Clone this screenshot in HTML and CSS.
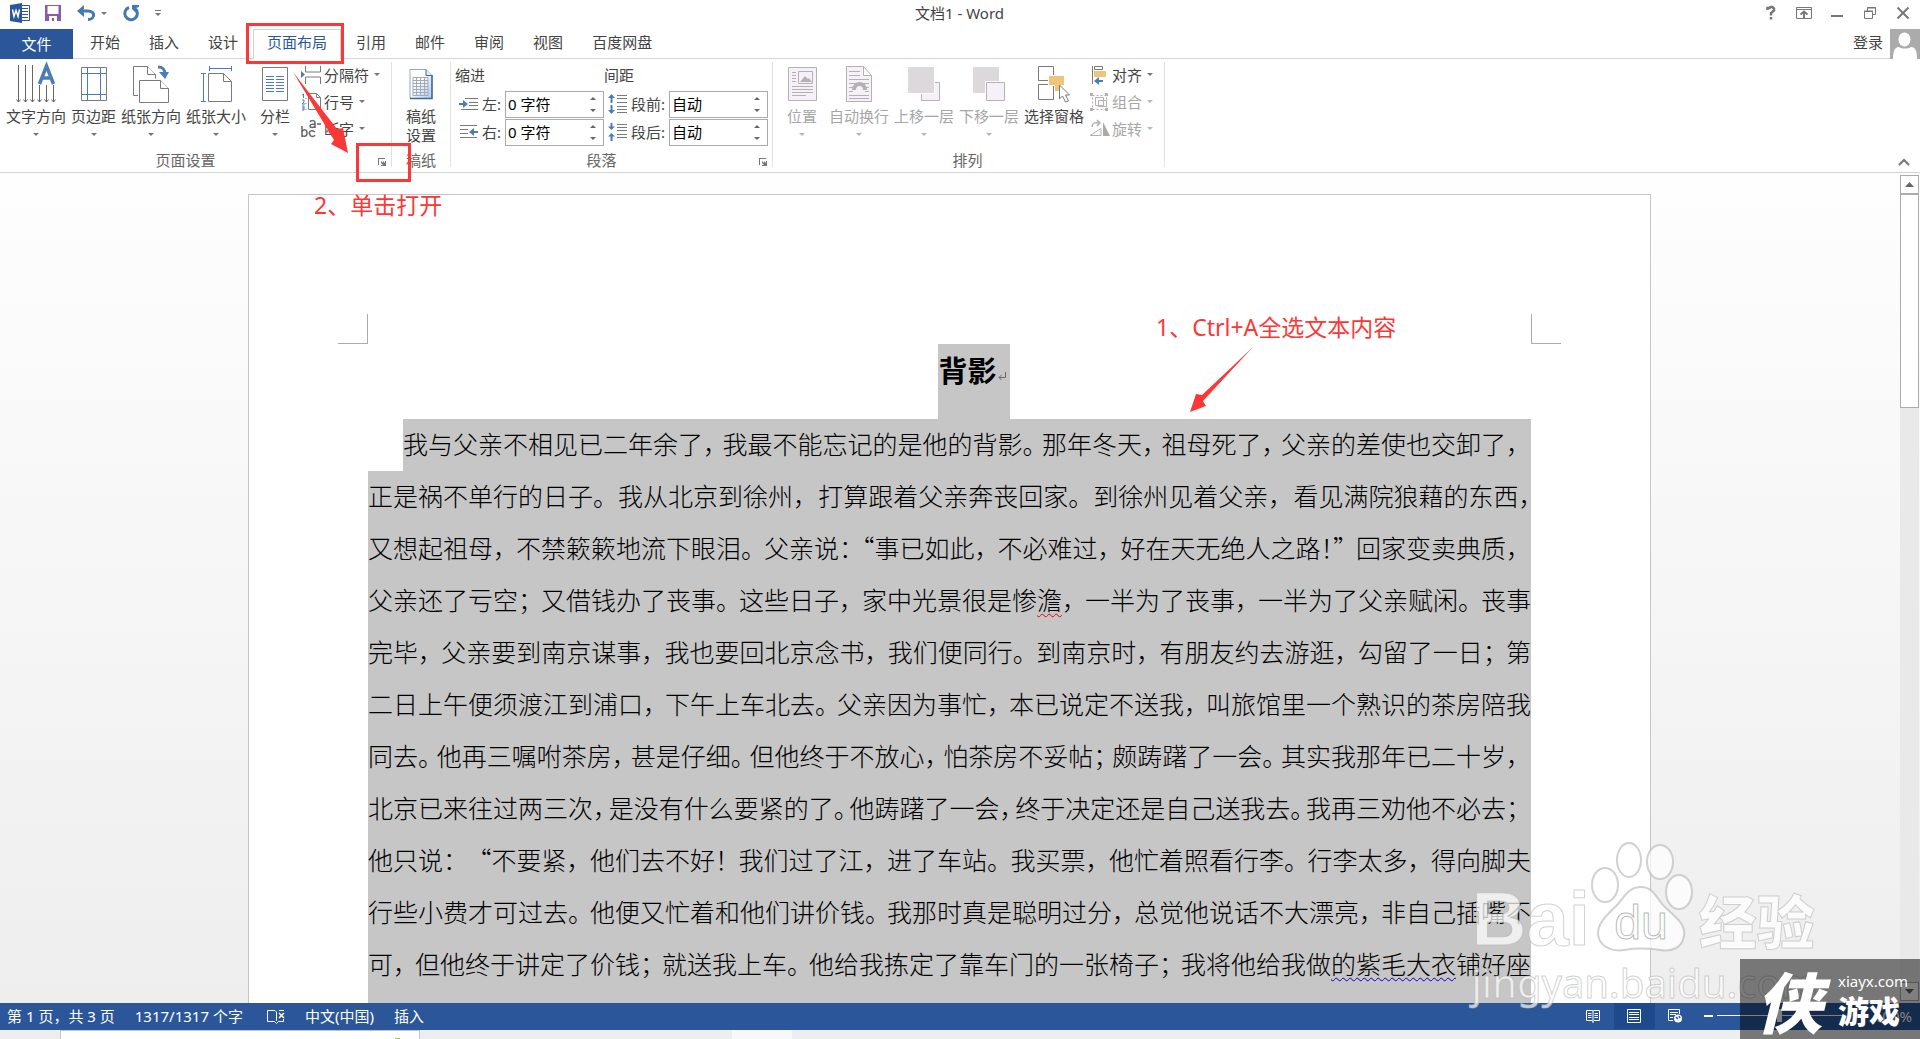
FILE: index.html
```html
<!DOCTYPE html>
<html lang="zh-CN">
<head>
<meta charset="utf-8">
<title>文档1 - Word</title>
<link rel="stylesheet" href="styles.css">
</head>
<body>
<div class="app">
  <header class="titlebar">
    <div class="quick">
      <svg class="q-word" width="20" height="20" viewBox="0 0 20 20"><path d="M11 2.500h8.500v15H11z" fill="#fff" stroke="#2b579a"/><path d="M12 5.500h6M12 8.500h6M12 11.500h6M12 14.500h6" stroke="#2b579a"/><path d="M0 2 12 0v20L0 18z" fill="#2b579a"/><path d="M2.500 6.500 4 13.500 6 7.500 8 13.500 9.500 6.500" fill="none" stroke="#fff" stroke-width="1.500"/></svg>
      <button class="plain q-save" aria-label="保存"><svg width="16" height="16" viewBox="0 0 16 16"><path d="M0 0h16v16H0z" fill="#8a5bab"/><path d="M2.500 1h11v8h-11zM4 11h8v5H9v-3H7v3H4z" fill="#fff"/></svg></button>
      <button class="plain q-undo" aria-label="撤消"><svg width="19" height="16" viewBox="0 0 19 16"><path d="M3 6h8c8 0 7 8.500 0 8.500" fill="none" stroke="#4478b0" stroke-width="3"/><path d="M7 0 0 6l7 6V8L5 6l2-2z" fill="#4478b0"/></svg></button>
      <i class="caret q-caret"></i>
      <button class="plain q-redo" aria-label="重复"><svg width="17" height="17" viewBox="0 0 17 17"><path d="M6 2.500a6.300 6.300 0 1 0 6 1" fill="none" stroke="#4478b0" stroke-width="3"/><path d="M9 0h7v2l-3 1v5L9 4z" fill="#4478b0"/></svg></button>
      <button class="plain q-more" aria-label="自定义快速访问工具栏"><svg width="6" height="6" viewBox="0 0 6 6"><path d="M0 0h6v1H0zM0 3h6L3 6z" fill="#777"/></svg></button>
    </div>
    <h1 class="doc-name">文档1 - Word</h1>
    <div class="win">
      <button class="plain" aria-label="帮助"><svg width="16" height="16" viewBox="0 0 16 16" fill="none" stroke="#777" stroke-width="2.500"><path d="M4.500 5V3h2l1-1h2l1.500 1.500v2L8 8v2.500"/><path d="M8 12v2.500"/></svg></button>
      <button class="plain" aria-label="功能区显示选项"><svg width="16" height="16" viewBox="0 0 16 16" fill="none" stroke="#777"><path d="M.5 2.500h15v11H.5zM.5 4.500h15"/><path d="M8 13V7M4.500 9.500 8 6.500l3.500 3" stroke-width="2"/></svg></button>
      <button class="plain" aria-label="最小化"><svg width="16" height="16" viewBox="0 0 16 16"><path d="M2 10h12v2H2z" fill="#777"/></svg></button>
      <button class="plain" aria-label="向下还原"><svg width="16" height="16" viewBox="0 0 16 16" fill="none" stroke="#777"><path d="M2.500 6.500h8v7h-8zM2 6h9M5.500 6V2.500h8v7H11M5 3h9"/></svg></button>
      <button class="plain" aria-label="关闭"><svg width="16" height="16" viewBox="0 0 16 16"><path d="m2.500 2.500 11 11m0-11-11 11" stroke="#777" stroke-width="2"/></svg></button>
    </div>
  </header>

  <nav class="tabs">
    <button class="file">文件</button>
    <div class="tab-list">
      <button class="tab">开始</button><button class="tab">插入</button><button class="tab">设计</button><button class="tab active">页面布局</button><button class="tab">引用</button><button class="tab">邮件</button><button class="tab">审阅</button><button class="tab">视图</button><button class="tab">百度网盘</button>
    </div>
    <a class="login" href="#">登录</a>
    <svg class="avatar" width="30" height="30" viewBox="0 0 30 30"><path d="M0 0h30v30H0z" fill="#ababab"/><path d="M3 30c0-10 3-12 6-12 3 2 9 2 12 0 4 0 6 3 6 12z" fill="#fff"/><ellipse cx="14.500" cy="10.500" rx="6" ry="7" fill="#fff"/></svg>
  </nav>

  <section class="ribbon">
    <div class="group g-page">
      <div class="tools">
        <button class="big"><svg width="42" height="40" viewBox="0 0 42 40" fill="none" stroke="#666"><path d="M3.500 2v37M10.500 2v37M17.500 2v37M24.500 22v17M31.500 22v17M38.500 22v17"/><path d="m1.500 36.500 2 2.500 2-2.500m3 0 2 2.500 2-2.500m3 0 2 2.500 2-2.500m3 0 2 2.500 2-2.500m3 0 2 2.500 2-2.500m3 0 2 2.500 2-2.500"/><path d="m24.500 21 7-18 7 18m-12-6h10" stroke="#4a7db5" stroke-width="3.500"/></svg><span>文字方向</span><i class="caret"></i></button>
        <button class="big"><svg width="28" height="40" viewBox="0 0 28 40" fill="none" stroke="#7a7a7a"><path d="M1.500 4.500h25v33h-25z"/><path d="M7.500 5v32M20.500 5v32M2 10.500h24M2 31.500h24" stroke="#4a7db5"/></svg><span>页边距</span><i class="caret"></i></button>
        <button class="big"><svg width="38" height="40" viewBox="0 0 38 40" fill="#fff" stroke="#7a7a7a"><path d="M6 32.500H1.500v-29h14l8 8v4"/><path d="M15.500 3.500v8h8" /><path d="M7.500 17.500h21l8 8v14h-29z"/><path d="M28.500 17.500v8h8"/><path d="M26 4c5 0 7 2 7 8" fill="none" stroke="#4a7db5" stroke-width="3"/><path d="M27 9h10l-4 7z" fill="#4a7db5" stroke="none"/></svg><span>纸张方向</span><i class="caret"></i></button>
        <button class="big"><svg width="34" height="40" viewBox="0 0 34 40" fill="none" stroke="#7a7a7a"><path d="M9.500 10.500h15l8 8v20h-23z"/><path d="M24.500 10.500v8h8"/><path d="M10.500 3v5m22-5v5m-22-2.500h22M2 10.500h5m-5 28h5m-2.500-28v28" stroke="#4a7db5"/></svg><span>纸张大小</span><i class="caret"></i></button>
        <button class="big col"><svg width="28" height="40" viewBox="0 0 28 40" fill="none" stroke="#7a7a7a"><path d="M1.500 4.500h25v33h-25z"/><path d="M5 13.500h8m2 0h8m-18 3h8m2 0h8m-18 3h8m2 0h8m-18 3h8m2 0h8m-18 3h8m2 0h8m-18 3h8m2 0h8" stroke="#4a7db5"/></svg><span>分栏</span><i class="caret"></i></button>
        <div class="stack">
          <button class="small"><svg width="20" height="20" viewBox="0 0 20 20" fill="none" stroke="#7a7a7a"><path d="M4.500 1v6h15V1M4.500 19v-7h15v7"/><path d="m0 6 4 3.500L0 13z" fill="#4a7db5" stroke="none"/></svg><span>分隔符</span><i class="caret"></i></button>
          <button class="small"><svg width="20" height="20" viewBox="0 0 20 20" fill="none" stroke="#7a7a7a"><path d="M7.500 1.500h8l4 4v12h-12zM15.500 1.500v4h4"/><path d="M1 3 2.500 2v4M1 8h2v2L1 12h3M1 14h2v4H1m0-2h2M5 6v1m0 4v1m0 5v1" stroke="#4a7db5"/></svg><span>行号</span><i class="caret"></i></button>
          <button class="small"><svg width="20" height="20" viewBox="0 0 20 20" fill="none" stroke="#666" stroke-width="1.500"><path d="M1 7v11M1 13c1-3 5-3 5 1s-4 4-5 2M14 13c-4-3-7 0-5 3 1 2 4 2 5 0M9 3c1-2 5-2 5 1v5M14 5c-3 0-5 0-5 2s4 2 5 0M16 5h4"/></svg><span>断字</span><i class="caret"></i></button>
        </div>
      </div>
      <div class="group-name">页面设置</div>
      <button class="launcher" aria-label="页面设置对话框"><svg width="8" height="8" viewBox="0 0 8 8"><path d="M0 0h7v1H1v6H0zM3 3l2 2V3h0L7 5V3h1v5H3V7h2L3 5z" fill="#777"/></svg></button>
    </div>
    <div class="group g-grid">
      <div class="tools">
        <button class="big two"><svg width="24" height="40" viewBox="0 0 24 40"><defs><linearGradient id="sheet" x2="1" y2="1"><stop offset=".4" stop-color="#fff"/><stop offset="1" stop-color="#a9c6ef"/></linearGradient></defs><path d="M1 6.500h16l6 6v23H1z" fill="url(#sheet)" stroke="#8fa9c9"/><path d="M23 12v23.500H1" fill="none" stroke="#3f6799" stroke-width="1.500"/><path d="M17 6.500v6h6" fill="#dce9f8" stroke="#3f6799"/><path d="M4 14.500h15v18H4zM4 17.500h15M4 20.500h15M4 23.500h15M4 26.500h15M4 29.500h15M7.500 14v18M11.500 14v18M15.500 14v18" fill="none" stroke="#a5abb5"/></svg><span>稿纸<br>设置</span></button>
      </div>
      <div class="group-name">稿纸</div>
    </div>
    <div class="group g-para">
      <div class="para">
        <div class="para-head">缩进</div><div class="para-head">间距</div>
        <div class="field"><svg width="19" height="20" viewBox="0 0 19 20"><path d="M6 4.500h13M10 8.500h9M10 11.500h9M2 15.500h17" stroke="#7a7a7a"/><path d="M0 9h4V6l5 4-5 4v-3H0z" fill="#4a7db5"/></svg><label for="il">左:</label><span class="spin"><input id="il" value="0 字符"><i class="up"></i><i class="down"></i></span></div>
        <div class="field"><svg width="19" height="20" viewBox="0 0 19 20"><path d="M9 1.500h10M9 4.500h10M9 8.500h10M9 12.500h10M9 15.500h10M9 18.500h10" stroke="#7a7a7a"/><path d="M3.500 0 7 4H4.500v5h-2V4H0zM3.500 20 7 16H4.500v-5h-2v5H0z" fill="#4a7db5"/></svg><label for="sb">段前:</label><span class="spin"><input id="sb" value="自动"><i class="up"></i><i class="down"></i></span></div>
        <div class="field"><svg width="19" height="20" viewBox="0 0 19 20"><path d="M1 3.500h17M1 7.500h8M1 11.500h8M1 15.500h17" stroke="#7a7a7a"/><path d="M19 9h-4V6l-5 4 5 4v-3h4z" fill="#4a7db5"/></svg><label for="ir">右:</label><span class="spin"><input id="ir" value="0 字符"><i class="up"></i><i class="down"></i></span></div>
        <div class="field"><svg width="19" height="20" viewBox="0 0 19 20"><path d="M9 2.500h10M9 5.500h10M9 8.500h10M9 12.500h10M9 15.500h10" stroke="#7a7a7a"/><path d="M3.500 8 7 4.500H4.500V1h-2v3.500H0zM3.500 11 7 14.500H4.500V19h-2v-4.500H0z" fill="#4a7db5"/></svg><label for="sa">段后:</label><span class="spin"><input id="sa" value="自动"><i class="up"></i><i class="down"></i></span></div>
      </div>
      <div class="group-name">段落</div>
      <button class="launcher" aria-label="段落对话框"><svg width="8" height="8" viewBox="0 0 8 8"><path d="M0 0h7v1H1v6H0zM3 3l2 2V3h0L7 5V3h1v5H3V7h2L3 5z" fill="#777"/></svg></button>
    </div>
    <div class="group g-arrange">
      <div class="tools">
        <button class="big pos" disabled><svg width="30" height="40" viewBox="0 0 30 40" fill="#f6f1f8" stroke="#b4b0b4"><path d="M1.500 4.500h28v33h-28z"/><path d="M11.500 8.500h14v12h-14zM5 9.500h4M5 12.500h4M5 15.500h4M5 18.500h4M5 23.500h21M5 26.500h21M5 29.500h21M5 32.500h14" /><path d="m13 19 5-6 3 3 1-1 3 4z" fill="#b4b0b4" stroke="none"/></svg><span>位置</span><i class="caret"></i></button>
        <button class="big" disabled><svg width="28" height="40" viewBox="0 0 28 40" fill="#f6f1f8" stroke="#b4b0b4"><path d="M1.500 3.500h17l8 9v26h-25zM18.500 3.500v9h8"/><path d="M4 8.500h11M4 12.500h11M4 16.500h20M4 20.500h20M4 24.500h4m12 0h4M4 28.500h4m12 0h4M4 32.500h20M4 35.500h20"/><path d="M9 27c0-8 11-8 11 0" fill="none" stroke-width="4"/></svg><span>自动换行</span><i class="caret"></i></button>
        <button class="big" disabled><svg width="34" height="40" viewBox="0 0 34 40"><path d="M14.500 19.500h18v18h-18z" fill="#f6f1f8" stroke="#b4b0b4"/><path d="M0 3h28v28H0z" fill="#fff"/><path d="M1 4h26v26H1z" fill="#dcd8dc"/></svg><span>上移一层</span><i class="caret"></i></button>
        <button class="big" disabled><svg width="34" height="40" viewBox="0 0 34 40"><path d="M1 4h26v26H1z" fill="#dcd8dc"/><path d="M13 18h21v21H13z" fill="#fff"/><path d="M14.500 19.500h18v18h-18z" fill="#f6f1f8" stroke="#b4b0b4"/></svg><span>下移一层</span><i class="caret"></i></button>
        <button class="big"><svg width="34" height="40" viewBox="0 0 34 40" fill="#fff" stroke="#7a7a7a"><path d="M1.500 3.500h15v14h-15zM1.500 21.500h15v15h-15z"/><path d="M11.500 12.500h16v10h-5v6h-5v-6h-6z" fill="#edc67c" stroke="#fff"/><path d="M22.500 22v14l3-3 3 6 3-1-3-6h4z"/></svg><span>选择窗格</span></button>
        <div class="stack">
          <button class="small"><svg width="20" height="20" viewBox="0 0 20 20"><path d="M3.500 1v18M5.500 1.500h8v3h-8z" fill="none" stroke="#7a7a7a"/><path d="M5 6h12v6H5z" fill="#edc67c"/><path d="m5 16 5-4v3h4v2h-4v3z" fill="#4a7db5"/></svg><span>对齐</span><i class="caret"></i></button>
          <button class="small" disabled><svg width="20" height="20" viewBox="0 0 20 20" fill="none" stroke="#b4b0b4"><path d="M3.500 3.500h14v14h-14z" stroke-dasharray="2 2"/><path d="M6.500 5.500h8v8h-8zM9.500 8.500h8v6h-8z"/><path d="M1 1h3v3H1zM16 1h3v3h-3zM1 16h3v3H1zM16 16h3v3h-3z" fill="#b4b0b4" stroke="none"/></svg><span>组合</span><i class="caret"></i></button>
          <button class="small" disabled><svg width="20" height="20" viewBox="0 0 20 20" fill="none" stroke="#b4b0b4"><path d="m1 16.500 11-7v7z"/><path d="M14 3v14h7z" fill="#aaa" stroke="none"/><path d="M3 8c0-4 3-5 7-4M8 1l3 3-3 3" stroke-width="1.500"/></svg><span>旋转</span><i class="caret"></i></button>
        </div>
      </div>
      <div class="group-name">排列</div>
    </div>
    <button class="plain collapse" aria-label="折叠功能区"><svg width="12" height="8" viewBox="0 0 12 8"><path d="m1 7 5-5 5 5" fill="none" stroke="#777" stroke-width="2"/></svg></button>
  </section>

  <main class="workspace">
    <div class="canvas">
      <article class="page">
        <div class="corners"><i class="corner"></i><i class="corner right"></i></div>
        <h2 class="heading"><span>背影<svg width="10" height="12" viewBox="0 0 10 12"><path d="M8.500 2v5.500H2M4.500 5 2 7.500 4.500 10" fill="none" stroke="#666"/></svg></span></h2>
        <div class="text">
          <p class="line first"><span>我与父亲不相见已二年余了，</span><span>我最不能忘记的是他的背影。</span><span>那年冬天，</span><span>祖母死了，</span><span class="tail">父亲的差使也交卸了，</span></p>
          <p class="line"><span>正是祸不单行的日子。</span><span>我从北京到徐州，</span><span>打算跟着父亲奔丧回家。</span><span>到徐州见着父亲，</span><span>看见满院狼藉的东西，</span></p>
          <p class="line"><span>又想起祖母，</span><span>不禁簌簌地流下眼泪。</span><span>父亲说：</span><span>“事已如此，</span><span>不必难过，</span><span>好在天无绝人之路！”</span><span class="tail">回家变卖典质，</span></p>
          <p class="line"><span>父亲还了亏空；</span><span>又借钱办了丧事。</span><span>这些日子，</span><span>家中光景很是惨<u class="spell">澹</u>，</span><span>一半为了丧事，</span><span>一半为了父亲赋闲。</span><span>丧事</span></p>
          <p class="line"><span>完毕，</span><span>父亲要到南京谋事，</span><span>我也要回北京念书，</span><span>我们便同行。</span><span>到南京时，</span><span>有朋友约去游逛，</span><span>勾留了一日；</span><span>第</span></p>
          <p class="line"><span>二日上午便须渡江到浦口，</span><span>下午上车北去。</span><span>父亲因为事忙，</span><span>本已说定不送我，</span><span>叫旅馆里一个熟识的茶房陪我</span></p>
          <p class="line"><span>同去。</span><span>他再三嘱咐茶房，</span><span>甚是仔细。</span><span>但他终于不放心，</span><span>怕茶房不妥帖；</span><span>颇踌躇了一会。</span><span class="tail">其实我那年已二十岁，</span></p>
          <p class="line"><span>北京已来往过两三次，</span><span>是没有什么要紧的了。</span><span>他踌躇了一会，</span><span>终于决定还是自己送我去。</span><span class="tail">我再三劝他不必去；</span></p>
          <p class="line"><span>他只说：</span><span><span class="tail">“</span>不要紧，</span><span>他们去不好！</span><span>我们过了江，</span><span>进了车站。</span><span>我买票，</span><span>他忙着照看行李。</span><span>行李太多，</span><span>得向脚夫</span></p>
          <p class="line"><span>行些小费才可过去。</span><span>他便又忙着和他们讲价钱。</span><span>我那时真是聪明过分，</span><span>总觉他说话不大漂亮，</span><span>非自己插嘴不</span></p>
          <p class="line"><span>可，</span><span>但他终于讲定了价钱；</span><span>就送我上车。</span><span>他给我拣定了靠车门的一张椅子；</span><span>我将他给我做<u class="grammar">的紫毛大衣</u>铺好座</span></p>
        </div>
        <div class="note note-one">1、Ctrl+A全选文本内容<svg width="66" height="68" viewBox="0 0 66 68"><path d="M64 1 13 49 7 48 1 66l16-6-3-5z" fill="#fb3838"/></svg></div>
      </article>
    </div>
    <div class="scroll"><button class="sb-btn" aria-label="向上滚动"><svg width="9" height="5" viewBox="0 0 9 5"><path d="m0 5 4.500-5L9 5z" fill="#666"/></svg></button><div class="thumb"></div><button class="sb-btn end" aria-label="向下滚动"><svg width="9" height="5" viewBox="0 0 9 5"><path d="m0 0 4.500 5L9 0z" fill="#666"/></svg></button></div>
  </main>

  <footer class="status">
    <span>第 1 页，共 3 页</span><span>1317/1317 个字</span>
    <svg class="proof" width="18" height="16" viewBox="0 0 18 16" fill="none" stroke="#fff"><path d="M9.500 13V4L8 2.500H.5v11h7l2 2 2-2h5V11M12 2.500h5"/><path d="m12 5 5 5m0-5-5 5" stroke-width="1.500"/></svg>
    <span>中文(中国)</span><span>插入</span>
    <div class="views">
      <button class="view" aria-label="阅读视图"><svg width="14" height="14" viewBox="0 0 14 14" fill="none" stroke="#fff"><path d="M7 2 6 1.500H.5v10H6l1 1 1-1h5.500v-10H8zM7 2v12M2 4.500h3.500M2 6.500h3.500M2 8.500h3.500M8.500 4.500H12M8.500 6.500H12M8.500 8.500H12"/></svg></button>
      <button class="view on" aria-label="页面视图"><svg width="14" height="14" viewBox="0 0 14 14" fill="none" stroke="#fff"><path d="M.5.500h13v13H.5zM2 3.500h10M2 5.500h10M2 8.500h10M2 10.500h10"/></svg></button>
      <button class="view" aria-label="Web 版式视图"><svg width="14" height="14" viewBox="0 0 14 14" fill="none" stroke="#fff"><path d="M5 11.500H.5V.5h11V5M2 3.500h8M2 5.500h6M2 8.500h3"/><circle cx="10" cy="9.500" r="4" fill="#fff" stroke="none"/><path d="m8 8 2 2m1-3 1 2" stroke="#2b579a" stroke-width="1.500"/></svg></button>
    </div>
    <button class="plain minus" aria-label="缩小"></button>
    <input class="zoom" type="range" aria-label="显示比例" min="10" max="190" value="100">
    <span class="pct">100%</span>
  </footer>
  <div class="taskbar"><div class="task-window"><i></i></div><div class="task-active"></div><time>21:00</time></div>
</div>

<div class="mark mark-tab"></div>
<div class="mark mark-launch"></div>
<svg class="mark-arrow" width="58" height="84" viewBox="0 0 58 84"><path d="m1 1 44 57 6-1 5 25-17-9 3-4z" fill="#fb3838"/></svg>
<div class="note note-two">2、单击打开</div>

<div class="baidu">
  <div class="brand"><b class="bai">Bai</b><svg width="104" height="112" viewBox="0 0 104 112"><g fill="#fff" fill-opacity=".72" stroke="#bdbdbd" stroke-opacity=".7" stroke-width="2"><ellipse cx="15" cy="44" rx="13" ry="17"/><ellipse cx="39" cy="19" rx="12" ry="17"/><ellipse cx="70" cy="21" rx="13" ry="17"/><ellipse cx="89" cy="51" rx="13" ry="17"/><path d="M51 46c14 0 16 14 26 22 10 9 19 16 17 27-2 12-12 16-24 14-14-2-24-2-36 0-13 2-25-4-26-16 0-11 8-18 17-27 9-8 12-20 26-20z"/></g><text x="51" y="98" text-anchor="middle" class="du">du</text></svg><b class="jy">经验</b></div>
  <div class="site">jingyan.baidu.com</div>
</div>
<div class="xia"><span class="xia-logo">侠</span><span class="xia-side"><span class="xia-url">xiayx.com</span><b>游戏</b></span></div>
</body>
</html>
```
FILE: styles.css
```css
* { box-sizing: border-box; }
body { margin: 0; font: 15px/20px "Noto Sans", "Noto Sans CJK SC", sans-serif; color: #444; background: #fff; overflow: hidden; }
button, input { font: inherit; color: inherit; }
button { border: 0; padding: 0; margin: 0; background: none; white-space: nowrap; }
svg { display: block; flex: none; overflow: visible; }
.app { height: 100vh; display: flex; flex-direction: column; }

.titlebar { height: 29px; display: flex; align-items: center; justify-content: space-between; flex: none; }
.quick, .win { flex: 1; display: flex; align-items: center; padding-bottom: 3px; }
.quick { padding-left: 10px; }
.q-save { margin-left: 15px; }
.q-undo { margin-left: 16px; }
.q-caret { margin-left: 5px; }
.q-redo { margin-left: 16px; }
.q-more { margin-left: 15px; }
.doc-name { margin: 0; font-size: 15px; font-weight: 400; padding: 0 2px 4px 0; }
.win { justify-content: flex-end; gap: 17px; padding-right: 9px; }
.caret { width: 0; height: 0; border: 3px solid transparent; border-top-color: #777; border-bottom: 0; flex: none; }

.tabs { height: 30px; display: flex; border-bottom: 1px solid #d4d4d4; flex: none; }
.file { width: 73px; height: 30px; background: #2b579a; color: #fff; }
.tab-list { display: flex; flex: 1; gap: 1px; margin-left: 3px; }
.tab { padding: 0 14px 4px; height: 29px; }
.tab.active { height: 30px; padding: 0 13px 5px; border: 1px solid #d4d4d4; border-bottom: 0; background: #fff; color: #2b579a; }
.login { color: #444; text-decoration: none; line-height: 26px; margin-right: 7px; }

.ribbon { height: 114px; display: flex; border-bottom: 1px solid #d4d4d4; position: relative; flex: none; padding-top: 3px; }
.group { position: relative; height: 105px; border-right: 1px solid #e1e1e1; display: flex; flex-direction: column; justify-content: space-between; }
.group-name { text-align: center; height: 16px; line-height: 18px; color: #666; }
.g-page { width: 392px; }
.g-page .group-name { padding-right: 20px; }
.g-grid { width: 59px; }
.g-para { width: 322px; }
.g-para .group-name { padding-right: 20px; }
.g-arrange { width: 392px; }
.g-arrange .group-name { padding-right: 2px; }
.tools { display: flex; gap: 5px; }
.g-page .tools { padding-left: 6px; }
.g-grid .tools { justify-content: center; }
.g-arrange .tools { padding-left: 7px; }
.big { display: flex; flex-direction: column; align-items: center; height: 80px; padding-top: 1px; }
.big span { line-height: 19px; margin-top: 4px; }
.big .caret { margin-top: 7px; }
.col { width: 48px; }
.pos { width: 44px; }
.stack { display: flex; flex-direction: column; margin-top: -1px; }
.g-page .stack { margin-left: -3px; }
.small { display: flex; align-items: center; height: 27px; gap: 3px; }
.small .caret { margin-left: 2px; }
button:disabled { color: #a6a6a6; }
button:disabled .caret { border-top-color: #b8b8b8; }
.launcher { position: absolute; right: 5px; bottom: 1px; }
.collapse { position: absolute; right: 10px; bottom: 6px; }
.para { display: grid; grid-template-columns: 153px 164px; grid-template-rows: 28px 28px 28px; }
.para-head { padding: 3px 0 0 4px; }
.para-head + .para-head { padding-left: 0; }
.field { display: flex; align-items: center; justify-content: flex-end; gap: 4px; }
.spin { width: 99px; height: 27px; position: relative; display: block; }
.spin input { width: 100%; height: 27px; border: 1px solid #ababab; padding: 0 2px 2px; color: #000; background: #fff; }
.up, .down { position: absolute; right: 8px; border: 3px solid transparent; }
.up { top: 6px; border-top: 0; border-bottom-color: #666; }
.down { bottom: 6px; border-bottom: 0; border-top-color: #666; }

.workspace { flex: 1; min-height: 0; display: flex; background: linear-gradient(#fefefe, #eee); }
.canvas { flex: 1; overflow: hidden; padding: 21px 1px 0 0; }
.page { position: relative; width: 1403px; height: 1985px; margin: 0 auto; padding: 120px 119px 0; background: #fff; border: 1px solid #c6c6c6; }
.corners { display: flex; justify-content: space-between; height: 30px; margin: -1px -30px 0; }
.corner { width: 30px; border: solid #ababab; border-width: 0 1px 1px 0; }
.corner.right { border-width: 0 0 1px 1px; }
.heading { margin: 0; height: 75px; padding-left: 48px; display: flex; justify-content: center; font: 700 29px/50px "Noto Sans CJK SC", sans-serif; color: #000; }
.heading span { display: flex; background: #c6c6c6; width: 72px; padding-left: 1px; }
.heading svg { margin-top: 26px; }
.text { font: 300 25px/48px "Noto Sans CJK SC", sans-serif; color: #000; background: #c6c6c6; padding-bottom: 20px; }
.line { margin: 0; height: 52px; display: flex; justify-content: space-between; white-space: nowrap; font-feature-settings: "halt"; background: #c6c6c6; }
.line.first { border-left: 35px solid #fff; }
.tail { font-feature-settings: normal; }
.spell, .grammar { text-decoration: underline wavy #e00 1px; text-underline-offset: 3px; }
.grammar { text-decoration-color: #00c; }

.scroll { width: 19px; margin: 2px 1px 2px 0; background: #e9e9e9; display: flex; flex-direction: column; }
.sb-btn { height: 19px; border: 1px solid #ababab; background: #fff; display: flex; align-items: center; justify-content: center; }
.sb-btn.end { margin-top: auto; }
.thumb { height: 214px; border: 1px solid #ababab; background: #fff; }

.status { height: 27px; flex: none; background: #2b579a; color: #fff; display: flex; align-items: center; padding: 0 8px 2px 7px; gap: 20px; }
.proof { margin-left: 4px; }
.views { display: flex; margin-left: auto; }
.view { width: 41px; height: 26px; display: flex; align-items: center; justify-content: center; }
.view.on { background: #1e4a8c; }
.minus { width: 9px; height: 2px; background: #fff; margin-left: -12px; }
.zoom { appearance: none; width: 125px; height: 14px; margin: 0 0 0 -16px; background: linear-gradient(#fff, #fff) center / 100% 1px no-repeat; }
.zoom::-webkit-slider-thumb { appearance: none; width: 5px; height: 13px; background: #fff; }
.pct { margin-left: 12px; }
.taskbar { height: 9px; flex: none; overflow: hidden; background: #eee; display: flex; }
.task-window { width: 360px; margin-left: 60px; border: 1px solid #c6c6c6; border-bottom: 0; background: #fff; padding: 7px 0 0 334px; }
.task-window i { display: block; width: 5px; height: 2px; background: #b5bd3c; }
.task-active { width: 60px; margin-left: 312px; background: #f8f8f8; }
.taskbar time { margin: 3px 94px 0 auto; color: #000; }

.mark { position: absolute; border: 3px solid #fb3838; }
.mark-tab { left: 246px; top: 23px; width: 98px; height: 41px; }
.mark-launch { left: 356px; top: 143px; width: 55px; height: 39px; }
.mark-arrow { position: absolute; left: 292px; top: 71px; }
.note { position: absolute; color: #fb3838; font-size: 23px; line-height: 30px; white-space: nowrap; }
.note-two { left: 314px; top: 190px; }
.note-one { left: 907px; top: 117px; }
.note-one svg { margin: 4px 0 0 33px; }

.baidu { position: absolute; right: 102px; bottom: 36px; color: rgba(255, 255, 255, .72); -webkit-text-stroke: 1px rgba(180, 180, 180, .6); }
.brand { display: flex; align-items: flex-end; height: 112px; margin-bottom: 10px; }
.bai { font: 700 76px/68px "Liberation Sans", sans-serif; }
.jy { font: 900 58px/68px "Noto Sans CJK SC", sans-serif; margin-left: 5px; }
.du { font: 400 48px "Liberation Sans", sans-serif; fill: #fff; stroke: #bbb; }
.site { font-size: 40px; line-height: 40px; }
.xia { position: absolute; right: 0; bottom: 0; width: 180px; height: 80px; background: rgba(0, 0, 0, .5); color: #fff; display: flex; align-items: center; gap: 16px; padding-left: 16px; }
.xia-logo { font: italic 900 66px/76px "Noto Sans CJK SC", sans-serif; }
.xia-side { display: flex; flex-direction: column; }
.xia-url { line-height: 22px; }
.xia-side b { font: 900 31px/36px "Noto Sans CJK SC", sans-serif; }
```
